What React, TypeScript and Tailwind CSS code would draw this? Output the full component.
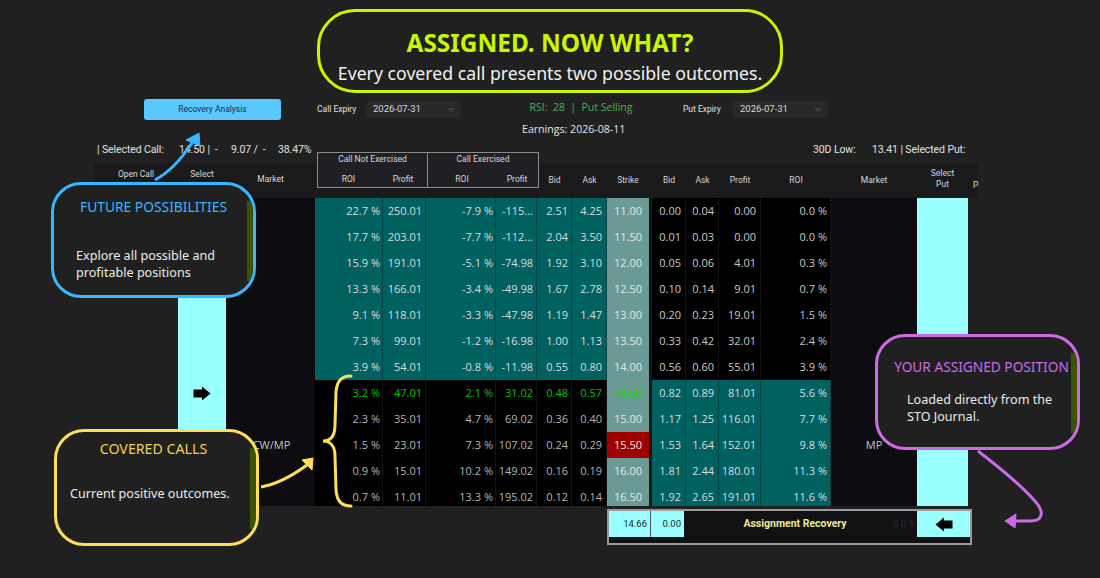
const rows = [
  ['22.7 %', '250.01', '-7.9 %', '-115...', '2.51', '4.25', '11.00', '0.00', '0.04', '0.00', '0.0 %'],
  ['17.7 %', '203.01', '-7.7 %', '-112...', '2.04', '3.50', '11.50', '0.01', '0.03', '0.00', '0.0 %'],
  ['15.9 %', '191.01', '-5.1 %', '-74.98', '1.92', '3.10', '12.00', '0.05', '0.06', '4.01', '0.3 %'],
  ['13.3 %', '166.01', '-3.4 %', '-49.98', '1.67', '2.78', '12.50', '0.10', '0.14', '9.01', '0.7 %'],
  ['9.1 %', '118.01', '-3.3 %', '-47.98', '1.19', '1.47', '13.00', '0.20', '0.23', '19.01', '1.5 %'],
  ['7.3 %', '99.01', '-1.2 %', '-16.98', '1.00', '1.13', '13.50', '0.33', '0.42', '32.01', '2.4 %'],
  ['3.9 %', '54.01', '-0.8 %', '-11.98', '0.55', '0.80', '14.00', '0.56', '0.60', '55.01', '3.9 %'],
  ['3.2 %', '47.01', '2.1 %', '31.02', '0.48', '0.57', '14.50', '0.82', '0.89', '81.01', '5.6 %'],
  ['2.3 %', '35.01', '4.7 %', '69.02', '0.36', '0.40', '15.00', '1.17', '1.25', '116.01', '7.7 %'],
  ['1.5 %', '23.01', '7.3 %', '107.02', '0.24', '0.29', '15.50', '1.53', '1.64', '152.01', '9.8 %'],
  ['0.9 %', '15.01', '10.2 %', '149.02', '0.16', '0.19', '16.00', '1.81', '2.44', '180.01', '11.3 %'],
  ['0.7 %', '11.01', '13.3 %', '195.02', '0.12', '0.14', '16.50', '1.92', '2.65', '191.01', '11.6 %'],
]

const gridCols = 'grid grid-cols-[84px_48px_89px_68px_43px_70px_41px_35px_35px_42px_3px_34px_33px_42px_70px_86px_51px_10px]'

function BlockArrow({ left = false }: { left?: boolean }) {
  return (
    <svg width="18" height="15" viewBox="0 0 18 15" className={left ? 'rotate-180' : ''}>
      <path d="M0.5 3.5 H9 V0.5 L17.5 7.5 L9 14.5 V11.5 H0.5 Z" fill="#000" />
    </svg>
  )
}

function Row({ cells, index }: { cells: string[]; index: number }) {
  const callTeal = index < 7
  const callBg = callTeal ? 'bg-[#006161] border-[#0b4345]' : 'bg-black border-[#141414]'
  const putBg = callTeal ? 'bg-black border-[#141414]' : 'bg-[#006161] border-[#0b4345]'
  const callText = index === 7 ? 'text-[#00c400]' : callTeal ? 'text-[#dcdcdc]' : 'text-[#b4b4b4]'
  const putText = callTeal ? 'text-[#c8c8c8]' : 'text-[#dcdcdc]'
  const cell = 'flex h-[26px] items-center justify-end border-r'
  const isAtm = index === 9

  return (
    <div className={`${gridCols} text-[11px]`}>
      <div />
      <div className="flex h-[26px] items-center justify-center bg-[#99ffff]">
        {index === 7 && <BlockArrow />}
      </div>
      <div className="flex h-[26px] items-center justify-center bg-[#0c0c11] pl-[2px] text-[#c4c4c4]">
        {index === 9 && 'CW/MP'}
      </div>
      <div className={`${cell} pr-[2px] ${callBg} ${callText}`}>{cells[0]}</div>
      <div className={`${cell} pr-[3px] ${callBg} ${callText}`}>{cells[1]}</div>
      <div className={`${cell} pr-[2px] ${callBg} ${callText}`}>{cells[2]}</div>
      <div className={`${cell} pr-[3px] ${callBg} ${callText}`}>{cells[3]}</div>
      <div className={`${cell} pr-[3px] ${callBg} ${callText}`}>{cells[4]}</div>
      <div className={`${cell} pr-[4px] ${callBg} ${callText}`}>{cells[5]}</div>
      <div
        className={`flex h-[26px] items-center justify-center ${isAtm ? 'bg-[#a00000]' : 'bg-[#6b9a96]'} ${index === 7 ? 'text-[#00dc00]' : 'text-[#e2e8e6]'}`}
      >
        {cells[6]}
      </div>
      <div className="bg-[#161616]" />
      <div className={`${cell} pr-[4px] ${putBg} ${putText}`}>{cells[7]}</div>
      <div className={`${cell} pr-[4px] ${putBg} ${putText}`}>{cells[8]}</div>
      <div className={`${cell} pr-[4px] ${putBg} ${putText}`}>{cells[9]}</div>
      <div className={`${cell} pr-[3px] ${putBg} ${putText}`}>{cells[10]}</div>
      <div className="flex h-[26px] items-center justify-center bg-[#0c0c11] text-[#c4c4c4]">
        {index === 9 && 'MP'}
      </div>
      <div className="h-[26px] bg-[#99ffff]" />
      <div />
    </div>
  )
}

function ExpirySelect({ label, labelWidth }: { label: string; labelWidth: string }) {
  return (
    <div className="flex items-center">
      <span className={`${labelWidth} font-['Roboto',sans-serif] text-[8.5px] text-[#e0e0e0]`}>{label}</span>
      <div className="flex h-[17px] w-[95px] items-center justify-between rounded-[3px] bg-[#282828] pl-[7px] pr-[6px] font-['Roboto',sans-serif] text-[9.5px] text-[#d8d8d8]">
        2026-07-31
        <span className="h-0 w-0 border-x-[4px] border-t-[4px] border-x-transparent border-t-[#3c3c3c]" />
      </div>
    </div>
  )
}

export default function App() {
  return (
    <div className="relative flex h-[578px] w-[1100px] flex-col overflow-hidden bg-[#202020] font-['Open_Sans',sans-serif] text-white">
      {/* title */}
      <div className="ml-[317px] mt-[9px] flex h-[84px] w-[466px] shrink-0 flex-col items-center rounded-[38px] border-[3px] border-[#c8f500] bg-[#202020] pt-[14px] font-['Noto_Sans',sans-serif]">
        <div className="text-[24.4px] font-bold leading-[34px] text-[#c8f500]">ASSIGNED. NOW WHAT?</div>
        <div className="mt-[1px] text-[17.7px] leading-[24px] text-[#f2f2f2]">
          Every covered call presents two possible outcomes.
        </div>
      </div>

      {/* controls */}
      <div className="ml-[144px] mt-[6px] flex h-[21px] shrink-0 items-center">
        <button className="h-[21px] w-[137px] rounded-[3px] bg-[#5bc8ff] font-['Roboto',sans-serif] text-[8.5px] text-[#15304a]">Recovery Analysis</button>
        <div className="ml-[36px]">
          <ExpirySelect label="Call Expiry" labelWidth="w-[49px]" />
        </div>
        <div className="w-[222px] pb-[4px] pl-[18px] text-center text-[10.5px] text-[#4caf50]">RSI:&nbsp; 28 &nbsp;|&nbsp; Put Selling</div>
        <ExpirySelect label="Put Expiry" labelWidth="w-[50px]" />
      </div>

      <div className="ml-[522px] mt-[1px] h-[16px] shrink-0 text-[10.6px] leading-[16px] text-[#e4e4e4]">Earnings: 2026-08-11</div>

      {/* selected row */}
      <div className="mt-[5px] flex h-[16px] shrink-0 font-['Roboto',sans-serif] text-[10.5px] leading-[16px] tracking-[-0.1px] text-[#e0e0e0]">
        <span className="ml-[97px] w-[82px]">| Selected Call:</span>
        <span className="w-[52px]">14.50 | &nbsp;-</span>
        <span className="w-[47px]">9.07 / &nbsp;-</span>
        <span className="w-[535px]">38.47%</span>
        <span className="w-[59px]">30D Low:</span>
        <span>13.41 | Selected Put:</span>
      </div>

      {/* table header */}
      <div className={`${gridCols} ml-[94px] mt-[5px] h-[35px] w-[884px] shrink-0 bg-[#1a1a1d] font-['Roboto',sans-serif] text-[8.5px] leading-[12px] text-[#d8d8d8]`}>
        <div className="pt-[5px] text-center">Open Call</div>
        <div className="pt-[5px] text-center">Select</div>
        <div className="pt-[10px] text-center">Market</div>
        <div className="col-span-2 -mr-[2px] -mt-[11px] ml-[2px] flex h-[36px] flex-col border border-[#8a8a8a] bg-[#202024]">
          <div className="text-center leading-[13px]">Call Not Exercised</div>
          <div className="mt-[7px] flex leading-[13px]">
            <span className="w-[62px] text-center">ROI</span>
            <span className="w-[49px] text-center">Profit</span>
          </div>
        </div>
        <div className="col-span-2 -mr-[2px] -mt-[11px] ml-[2px] flex h-[36px] flex-col border border-l-0 border-[#8a8a8a] bg-[#202024]">
          <div className="text-center leading-[13px]">Call Exercised</div>
          <div className="mt-[7px] flex leading-[13px]">
            <span className="w-[68px] text-center">ROI</span>
            <span className="w-[42px] text-center">Profit</span>
          </div>
        </div>
        <div className="pt-[11px] text-center">Bid</div>
        <div className="pt-[11px] text-center">Ask</div>
        <div className="pt-[11px] text-center">Strike</div>
        <div />
        <div className="pt-[11px] text-center">Bid</div>
        <div className="pt-[11px] text-center">Ask</div>
        <div className="pt-[11px] text-center">Profit</div>
        <div className="pt-[11px] text-center">ROI</div>
        <div className="pt-[11px] text-center">Market</div>
        <div className="pt-[5px] text-center leading-[11px]">
          Select
          <br />
          Put
        </div>
        <div className="pl-[5px] pt-[16px]">P</div>
      </div>

      {/* table body */}
      <div className="ml-[94px] h-[308px] w-[884px] shrink-0 overflow-hidden">
        {rows.map((cells, i) => (
          <Row key={cells[6]} cells={cells} index={i} />
        ))}
      </div>

      {/* assignment row */}
      <div className="ml-[607px] mt-[3px] h-[36px] w-[365px] shrink-0 border-2 border-[#9a9a9a] bg-[#111114]">
        <div className="flex h-[26px] font-['Roboto',sans-serif] text-[9.5px]">
          <div className="flex w-[42px] items-center justify-end border-r border-[#555] bg-[#99ffff] pr-[3px] text-[#202a2a]">14.66</div>
          <div className="flex w-[33px] items-center justify-end bg-[#99ffff] pr-[3px] text-[#202a2a]">0.00</div>
          <div className="flex w-[233px] items-center">
            <div className="w-[209px] pl-[13px] text-center text-[10.5px] font-bold text-[#f3e88e]">Assignment Recovery</div>
            <span className="text-[#2a2a2e]">0.0 %</span>
          </div>
          <div className="flex w-[53px] items-center justify-center bg-[#99ffff]">
            <BlockArrow left />
          </div>
        </div>
      </div>

      {/* callouts */}
      <div className="absolute left-[51px] top-[182px] h-[116px] w-[205px] overflow-hidden rounded-[30px] border-[3px] border-[#38b6ff] bg-[#202020] font-['Noto_Sans',sans-serif]">
        <div className="absolute bottom-[14px] right-[0px] top-[16px] w-[6px] bg-[#3c5400]" />
        <div className="pt-[13px] text-center text-[13.8px] leading-[18px] text-[#38b6ff]">FUTURE POSSIBILITIES</div>
        <div className="ml-[22px] mt-[31px] text-[12.6px] leading-[17px] text-[#ececec]">
          Explore all possible and
          <br />
          profitable positions
        </div>
      </div>

      <div className="absolute left-[54px] top-[429px] h-[117px] w-[205px] overflow-hidden rounded-[30px] border-[3px] border-[#ffde59] bg-[#202020] font-['Noto_Sans',sans-serif]">
        <div className="absolute bottom-[14px] right-[0px] top-[16px] w-[6px] bg-[#3c5400]" />
        <div className="pr-[6px] pt-[8px] text-center text-[14.2px] leading-[18px] text-[#f2d24e]">COVERED CALLS</div>
        <div className="ml-[13px] mt-[27px] text-[12.6px] leading-[17px] text-[#ececec]">Current positive outcomes.</div>
      </div>

      <div className="absolute left-[875px] top-[334px] h-[116px] w-[205px] overflow-hidden rounded-[30px] border-[3px] border-[#cb6ce6] bg-[#202020] font-['Noto_Sans',sans-serif]">
        <div className="absolute bottom-[14px] right-[0px] top-[16px] w-[6px] bg-[#3c5400]" />
        <div className="pl-[8px] pt-[21px] text-center text-[13.7px] leading-[18px] text-[#cb6ce6]">YOUR ASSIGNED POSITION</div>
        <div className="ml-[29px] mt-[15px] text-[12.6px] leading-[17px] text-[#ececec]">
          Loaded directly from the
          <br />
          STO Journal.
        </div>
      </div>

      {/* arrows and brace */}
      <svg className="pointer-events-none absolute left-0 top-0" width="1100" height="578" viewBox="0 0 1100 578" fill="none">
        <path d="M155 180 C170 172 182 158 192 143" stroke="#38b6ff" strokeWidth="3" />
        <path d="M186 140 L199 133 L200 146 Z" fill="#38b6ff" stroke="#38b6ff" strokeWidth="1" strokeLinejoin="round" />
        <path d="M261 487 C278 484 292 476 307 465" stroke="#ffde59" strokeWidth="3" />
        <path d="M302 460 L313 458 L312 470 Z" fill="#ffde59" stroke="#ffde59" strokeWidth="1" strokeLinejoin="round" />
        <path
          d="M351 376 C341 376 337 381 336 392 L335 425 C335 435 331 441 323 441 C331 441 335 447 335 456 L336 490 C337 501 341 506 351 506"
          stroke="#ffde59"
          strokeWidth="3"
          strokeLinecap="round"
        />
        <path d="M978 451 C1000 468 1020 484 1034 500 C1046 513 1042 521 1030 521 L1012 521" stroke="#cb6ce6" strokeWidth="3" />
        <path d="M1005 521 L1016 514 L1015 528 Z" fill="#cb6ce6" stroke="#cb6ce6" strokeWidth="1" strokeLinejoin="round" />
      </svg>
    </div>
  )
}
